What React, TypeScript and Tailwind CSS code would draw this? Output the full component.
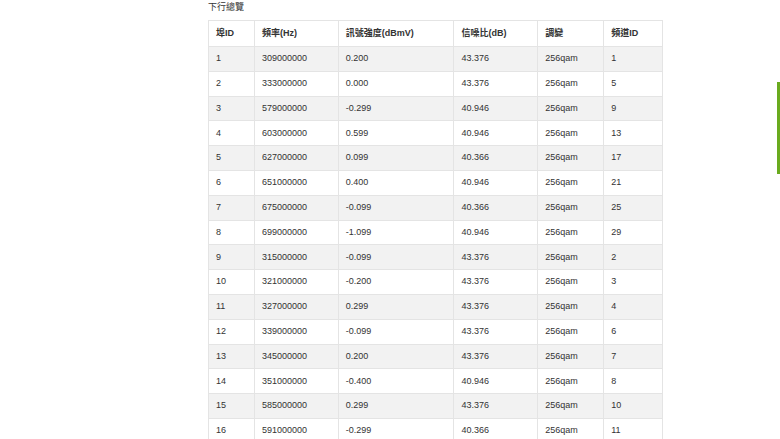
const rows = [
["1","309000000","0.200","43.376","256qam","1"],
["2","333000000","0.000","43.376","256qam","5"],
["3","579000000","-0.299","40.946","256qam","9"],
["4","603000000","0.599","40.946","256qam","13"],
["5","627000000","0.099","40.366","256qam","17"],
["6","651000000","0.400","40.946","256qam","21"],
["7","675000000","-0.099","40.366","256qam","25"],
["8","699000000","-1.099","40.946","256qam","29"],
["9","315000000","-0.099","43.376","256qam","2"],
["10","321000000","-0.200","43.376","256qam","3"],
["11","327000000","0.299","43.376","256qam","4"],
["12","339000000","-0.099","43.376","256qam","6"],
["13","345000000","0.200","43.376","256qam","7"],
["14","351000000","-0.400","40.946","256qam","8"],
["15","585000000","0.299","43.376","256qam","10"],
["16","591000000","-0.299","40.366","256qam","11"],
];
const widths = ["w-[46px]","w-[84px]","w-[116px]","w-[84px]","w-[66px]","w-[58px]"];
const heads = ["埠ID","頻率(Hz)","訊號強度(dBmV)","信噪比(dB)","調變","頻道ID"];
export default function App() {
  return (
    <div className="relative w-[780px] h-[439px] overflow-hidden bg-white text-[#333] text-[9px]" style={{fontFamily:'"Liberation Sans","Noto Sans CJK TC",sans-serif'}}>
      <div className="absolute right-0 top-[82px] w-[3px] h-[92px] bg-[#6aab1e]" />
      <div className="pl-[208px]">
        <div className="h-[20px] pt-[1px] leading-[12px]">下行總覽</div>
        <div className="w-[455px] border border-[#e4e4e4]">
          <div className="flex h-[25px] items-center font-bold">
            {heads.map((h,i)=>(<div key={i} className={`${widths[i]} pl-[7px] border-r border-[#e4e4e4] last:border-r-0 h-full flex items-center`}>{h}</div>))}
          </div>
          {rows.map((r,ri)=>(
            <div key={ri} className={`flex h-[24.8px] border-t border-[#e4e4e4] ${ri%2===0?"bg-[#f2f2f2]":"bg-white"}`}>
              {r.map((c,i)=>(<div key={i} className={`${widths[i]} pl-[7px] border-r border-[#e4e4e4] last:border-r-0 flex items-center`}>{c}</div>))}
            </div>
          ))}
        </div>
      </div>
    </div>
  );
}
